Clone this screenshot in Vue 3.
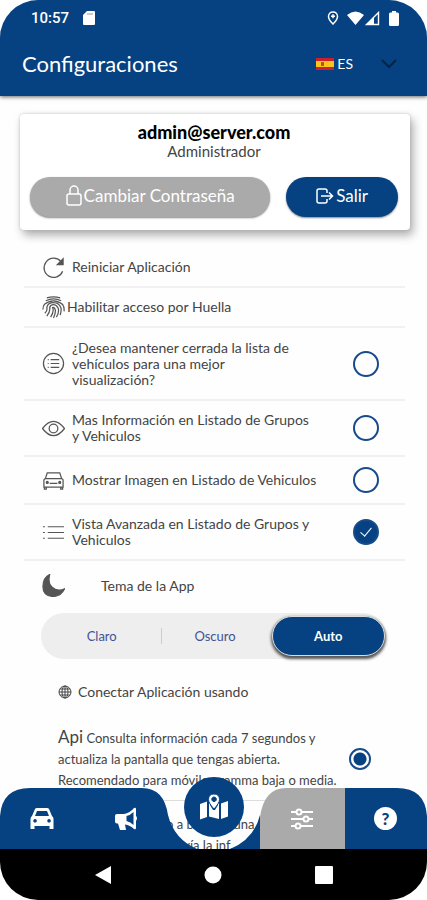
<template>
  <div class="phone">
    <header class="header">
      <div class="status">
        <span class="status__time">10:57</span>
        <svg class="status__card" viewBox="0 0 12 14"><path d="M4 0h7a1 1 0 0 1 1 1v12a1 1 0 0 1-1 1H1a1 1 0 0 1-1-1V4z" /><path class="status__notch" d="M4 3h6" /></svg>
        <div class="status__icons">
          <svg width="12" height="14" viewBox="0 0 12 14"><path d="M6 1C3.400 1 1.500 2.900 1.500 5.400 1.500 8.500 6 13 6 13s4.500-4.500 4.500-7.600C10.500 2.900 8.600 1 6 1zM4 5.300h4M6 3.300v4" fill="none" stroke="#fff" stroke-width="1.500" /></svg>
          <svg width="34" height="15" viewBox="0 0 34 15"><path d="M0 4Q8.500-3 17 4L8.500 14z" fill="#fff" /><path d="M31.500 1.500V13.500H19.500z" fill="none" stroke="#fff" stroke-width="1.400" /><path d="M27 6v8h-8z" fill="#fff" /></svg>
          <svg width="10" height="15" viewBox="0 0 10 15"><path d="M3 0h4v1.500h1.500Q10 1.500 10 3v10.500Q10 15 8.500 15h-7Q0 15 0 13.500V3Q0 1.500 1.500 1.500H3z" fill="#fff" /></svg>
        </div>
      </div>
      <div class="toolbar">
        <h1 class="toolbar__title">Configuraciones</h1>
        <button class="language" type="button" aria-label="Idioma">
          <svg width="18" height="12" viewBox="0 0 18 12"><path fill="#c8202f" d="M0 0h18v12H0z" /><path fill="#fcc419" d="M0 3h18v6H0z" /><path fill="#b5541c" d="M5 4h3v4H5z" /></svg>
          <span>ES</span>
          <svg class="language__arrow" width="16" height="10" viewBox="0 0 16 10"><path d="M1 1l7 7 7-7" fill="none" stroke="#052345" stroke-width="2" /></svg>
        </button>
      </div>
    </header>

    <main class="content">
      <section class="account">
        <div class="account__mail">admin@server.com</div>
        <div class="account__role">Administrador</div>
        <div class="account__actions">
          <button class="pill pill--gray" type="button">
            <svg width="16" height="22" viewBox="0 0 16 22"><rect x="1" y="9" width="14" height="11" rx="2" /><path d="M4 9V5a4 4 0 0 1 8 0v4" /></svg>
            Cambiar Contraseña
          </button>
          <button class="pill pill--blue" type="button">
            <svg width="18" height="16" viewBox="0 0 18 16"><path d="M11 5V3q0-2-2-2H3Q1 1 1 3v10q0 2 2 2h6q2 0 2-2v-2M5 8h11M13 4.500L16.500 8 13 11.500" /></svg>
            Salir
          </button>
        </div>
      </section>

      <div class="settings">
        <button class="row row--short" type="button">
          <svg class="row__icon" viewBox="0 0 24 24"><path d="M19.500 5.500A10 10 0 1 0 21.500 16" /><path class="solid" d="M22 3v6h-6z" /></svg>
          <span class="row__text">Reiniciar Aplicación</span>
        </button>
        <button class="row row--finger" type="button">
          <svg class="row__icon" viewBox="0 0 24 24"><path d="M5 2q7-2 14 0M4 5q8-4 16 0M2 9q10-8 20 0M1 14q0-7 7-8M23 16q1-9-8-10M3 18q3-3 2-6 1-5 7-5t8 6q0 4-1 7M5 21q4-5 3-9 1-3 4-3t5 4q1 5-2 9M9 22q4-6 2-10 2-1 3 3 0 4-2 8" /></svg>
          <span class="row__text">Habilitar acceso por Huella</span>
        </button>
        <label v-for="item in options" :key="item.icon" class="row" :class="'row--' + item.icon">
          <svg class="row__icon" viewBox="0 0 24 24">
            <template v-if="item.icon === 'circle'"><circle cx="12" cy="12" r="10.500" /><path d="M9 8h9M9 12h9M9 16h9M6 8h1M6 12h1M6 16h1" /></template>
            <template v-else-if="item.icon === 'eye'"><path d="M0.500 12Q12-3 23.500 12 12 27 0.500 12z" /><circle cx="12" cy="12" r="4.500" /></template>
            <template v-else-if="item.icon === 'car'"><path d="M3.500 10L5.500 4h13l2 6M2 12q0-2 2-2h16q2 0 2 2v7H2zM2.500 19v2h2v-2M19.500 19v2h2v-2M8 15h8" /><circle class="solid" cx="5.500" cy="14" r="1" /><circle class="solid" cx="18.500" cy="14" r="1" /></template>
            <path v-else d="M6 6h17M6 12h17M6 18h17M1 6h2M1 12h2M1 18h2" />
          </svg>
          <span class="row__text">{{ item.text }}</span>
          <input v-model="item.checked" class="check" type="checkbox">
        </label>

        <div class="theme">
          <svg class="row__icon" viewBox="0 0 24 24"><path class="moon" d="M8 0.500Q5 12 14 16q5 2 9.500-.5Q20 23 12 23.500 1 23 1 13 1 4 8 .5z" /></svg>
          <span class="theme__label">Tema de la App</span>
        </div>
        <div class="segment">
          <button
            v-for="name in themes"
            :key="name"
            class="segment__button"
            :class="{ 'segment__button--active': name === theme }"
            type="button"
            @click="theme = name"
          >{{ name }}</button>
        </div>

        <div class="connection">
          <div class="connection__title">
            <svg width="14" height="14" viewBox="0 0 14 14"><circle cx="7" cy="7" r="6" /><ellipse cx="7" cy="7" rx="3" ry="6" /><path d="M7 1v12M1 7h12M2 4h10M2 10h10" /></svg>
            Conectar Aplicación usando
          </div>
          <label class="mode">
            <span class="mode__text"><span class="mode__name">Api</span> Consulta información cada 7 segundos y actualiza la pantalla que tengas abierta. Recomendado para móviles gamma baja o media.</span>
            <input v-model="mode" class="radio" type="radio" name="mode" value="api">
          </label>
          <label class="mode mode--socket">
            <span class="mode__text"><span class="mode__name">Socket</span> Conectado a base de una<br>red, el servidor nos envía la inf.</span>
          </label>
        </div>
      </div>
    </main>

    <footer class="footer">
      <nav class="tabs">
        <svg class="tabs__shape" viewBox="0 0 427 61" preserveAspectRatio="none">
          <path fill="#064282" d="M0 61V28Q2 0 30 0H142Q164 0 168 27 174 51 197 61z" />
          <path fill="#064282" d="M230 61Q254 51 260 27V61zM345 0H397Q425 0 427 28V61H345z" />
          <path fill="#aaa" d="M260 61V29Q264 0 286 0H345V61z" />
        </svg>
        <button class="tab" type="button" aria-label="Vehículos">
          <svg width="24" height="22" viewBox="0 0 24 22"><path fill-rule="evenodd" d="M5 1q.5-1 2-1h10q1.500 0 2 1l3 7q1.500 1 1.500 3v10h-4v-3h-15v3h-4V11q0-2 1.500-3zm2 2L5 8h14l-2-5zM5 11a1.800 1.800 0 1 0 .1 0zm14 0a1.800 1.800 0 1 0 .1 0z" /></svg>
        </button>
        <button class="tab" type="button" aria-label="Alertas">
          <svg width="24" height="24" viewBox="0 0 24 24"><path fill-rule="evenodd" d="M20 1q2-1 2 1v7q2 2 0 5v7q0 2-2 1-4-4-9-4.500l1 5.500H6L4 16.500H3q-2 0-2-2V9q0-2 2-2h7q6-1 10-6zM19.500 5q-3 3-7 4v5q4 1 7 4z" /></svg>
        </button>
        <button class="map" type="button" aria-label="Mapa">
          <svg width="28" height="26" viewBox="0 0 28 26"><path d="M0 10l7-2.500V23l-7 2.500zM9 8q1 4 4 8h2q3-4 4-8v17L9 22.500zM21 9.500L28 7v15.500L21 25z" /><path class="pin" fill-rule="evenodd" d="M14 0q5.500 0 5.500 5.500 0 3.500-5.500 9.500-5.500-6-5.500-9.500Q8.500 0 14 0zm0 3a2.300 2.300 0 1 0 .1 0z" /></svg>
        </button>
        <button class="tab" type="button" aria-label="Configuraciones">
          <svg width="24" height="22" viewBox="0 0 24 22"><path class="line" d="M1 4h22M1 11h22M1 18h22" /><circle class="knob" cx="9" cy="4" r="2.500" /><circle class="knob" cx="16" cy="11" r="2.500" /><circle class="knob" cx="8" cy="18" r="2.500" /></svg>
        </button>
        <button class="tab" type="button" aria-label="Ayuda"><span class="help">?</span></button>
      </nav>
      <div class="system">
        <svg width="18" height="20" viewBox="0 0 18 20"><path d="M1 10L17 1v18z" /></svg>
        <svg width="18" height="18" viewBox="0 0 18 18"><circle cx="9" cy="9" r="8.500" /></svg>
        <svg width="18" height="18" viewBox="0 0 18 18"><rect width="18" height="18" rx="1" /></svg>
      </div>
    </footer>
  </div>
</template>

<script setup>
import { ref } from 'vue';

const options = ref([
  { icon: 'circle', text: '¿Desea mantener cerrada la lista de\nvehículos para una mejor\nvisualización?', checked: false },
  { icon: 'eye', text: 'Mas Información en Listado de Grupos\ny Vehiculos', checked: false },
  { icon: 'car', text: 'Mostrar Imagen en Listado de Vehiculos', checked: false },
  { icon: 'list', text: 'Vista Avanzada en Listado de Grupos y\nVehiculos', checked: true },
]);

const themes = ['Claro', 'Oscuro', 'Auto'];
const theme = ref('Auto');
const mode = ref('api');
</script>

<style>
body {
  background: #fff;
}
</style>

<style scoped>
* {
  box-sizing: border-box;
}

button {
  border: 0;
  background: none;
  padding: 0;
  font: inherit;
  color: inherit;
}

.phone {
  position: relative;
  display: flex;
  flex-direction: column;
  height: 100vh;
  overflow: hidden;
  border-radius: 38px;
  background: #fefefe;
  color: #444;
  font-family: Lato, "Liberation Sans", sans-serif;
}

.header {
  background: #064282;
  color: #fff;
  box-shadow: 0 1px 4px #666;
}

.status {
  display: flex;
  align-items: center;
  height: 36px;
  padding: 0 28px 0 31px;
}

.status__time {
  font: 500 15px Roboto, sans-serif;
}

.status__card {
  width: 12px;
  height: 14px;
  margin-left: 14px;
  fill: #fff;
}

.status__notch {
  stroke: #999;
}

.status__icons {
  display: flex;
  gap: 8px;
  margin-left: auto;
}

.toolbar {
  display: flex;
  align-items: center;
  justify-content: space-between;
  height: 60px;
  padding: 0 30px 5px 22px;
}

.toolbar__title {
  margin: 0;
  font-size: 22px;
  font-weight: 400;
}

.language {
  display: flex;
  align-items: center;
  gap: 3px;
  font-size: 14px;
}

.language__arrow {
  margin-left: 25px;
}

.content {
  flex: 1;
  min-height: 0;
  overflow: hidden;
  padding: 18px 17px 0 20px;
}

.account {
  padding: 8px 12px 13px 10px;
  border-radius: 4px;
  background: #fff;
  box-shadow: 3px 5px 10px #aaa, 0 0 3px #ccc;
  text-align: center;
}

.account__mail {
  color: #000;
  font-size: 18px;
  font-weight: 900;
  line-height: 20px;
}

.account__role {
  font-size: 15px;
  line-height: 19px;
}

.account__actions {
  display: grid;
  grid-template-columns: 241fr 112fr;
  gap: 16px;
  margin-top: 16px;
}

.pill {
  display: flex;
  align-items: center;
  justify-content: center;
  gap: 2px;
  height: 40px;
  padding-bottom: 3px;
  border-radius: 20px;
  color: #fff;
  font-size: 17px;
  box-shadow: 0 1px 2px #888;
}

.pill svg {
  fill: none;
  stroke: currentColor;
  stroke-width: 1.5;
}

.pill--gray {
  background: #aaa;
}

.pill--blue {
  background: #064282;
}

.settings {
  padding: 18px 5px 0 4px;
}

.row {
  display: flex;
  align-items: center;
  width: 100%;
  min-height: 56px;
  padding: 0 26px 0 18px;
  border-bottom: 2px solid #f1f1f1;
  gap: 7px;
  text-align: left;
}

.row--short,
.row--finger {
  min-height: 40px;
}

.row--finger {
  gap: 2px;
}

.row--circle {
  min-height: 73px;
}

.row--car {
  min-height: 48px;
}

.row__icon {
  flex: none;
  width: 23px;
  height: 23px;
  fill: none;
  stroke: #555;
  stroke-width: 1.3;
}

.solid,
.moon {
  fill: #555;
}

.row__text {
  flex: 1;
  font-size: 14px;
  line-height: 16px;
  white-space: pre-line;
}

.check {
  flex: none;
  appearance: none;
  display: grid;
  place-items: center;
  width: 26px;
  height: 26px;
  margin: 0;
  border: 2px solid #174b8c;
  border-radius: 50%;
}

.check:checked {
  background: #064282;
}

.check:checked::before {
  content: "";
  width: 5px;
  height: 10px;
  margin-bottom: 3px;
  border: solid #fff;
  border-width: 0 1px 1px 0;
  transform: rotate(40deg);
}

.theme {
  display: flex;
  align-items: center;
  gap: 36px;
  height: 52px;
  padding: 0 0 3px 18px;
  font-size: 14px;
}

.segment {
  display: grid;
  grid-template-columns: 1fr 1fr 1fr;
  align-items: center;
  height: 46px;
  margin: 0 19px 0 17px;
  padding: 0 1px 0 4px;
  border-radius: 23px;
  background: linear-gradient(#ccc, #ccc) 35% center / 1px 16px no-repeat #eee;
  color: #425393;
  font-size: 13px;
}

.segment__button {
  height: 16px;
}

.segment__button--active {
  height: 40px;
  border: 1px solid #ddd;
  border-radius: 20px;
  background: #064282;
  box-shadow: 0 2px 3px 1px #555;
  color: #fff;
  font-weight: 700;
}

.connection {
  padding: 24px 31px 0 34px;
}

.connection__title {
  display: flex;
  align-items: center;
  gap: 6px;
  font-size: 14px;
  line-height: 18px;
}

.connection__title svg {
  fill: none;
  stroke: #444;
}

.mode {
  display: flex;
  align-items: center;
  margin-top: 25px;
}

.mode__text {
  flex: 1;
  font-size: 13px;
  line-height: 21px;
}

.mode__name {
  font-size: 17px;
}

.mode--socket {
  margin-top: 9px;
  padding-top: 11px;
  border-top: 1px solid #ddd;
}

.radio {
  flex: none;
  appearance: none;
  width: 22px;
  height: 22px;
  margin: 0 3px 0 0;
  border: 2px solid #174b8c;
  border-radius: 50%;
}

.radio:checked {
  background: radial-gradient(circle, #064282 6px, #fff 7px);
}

.footer {
  position: absolute;
  right: 0;
  bottom: 0;
  left: 0;
}

.tabs {
  position: relative;
  display: grid;
  grid-template-columns: 84fr 84fr 92fr 84fr 83fr;
  height: 61px;
}

.tabs__shape {
  position: absolute;
  width: 100%;
  height: 100%;
}

.tab,
.map {
  position: relative;
  display: grid;
  place-items: center;
  fill: #fff;
}

.map {
  justify-self: center;
  width: 60px;
  height: 60px;
  margin-top: -11px;
  border-radius: 50%;
  background: #064282;
}

.pin {
  stroke: #064282;
}

.line {
  stroke: #fff;
  stroke-width: 2;
}

.knob {
  fill: #aaa;
  stroke: #fff;
  stroke-width: 2;
}

.help {
  width: 23px;
  height: 23px;
  border-radius: 50%;
  background: #fff;
  color: #064282;
  font-size: 17px;
  font-weight: 900;
  line-height: 23px;
}

.system {
  display: grid;
  grid-template-columns: 1fr 1fr 1fr;
  place-items: center;
  height: 51px;
  padding: 0 48px;
  background: #000;
  fill: #fff;
}
</style>
